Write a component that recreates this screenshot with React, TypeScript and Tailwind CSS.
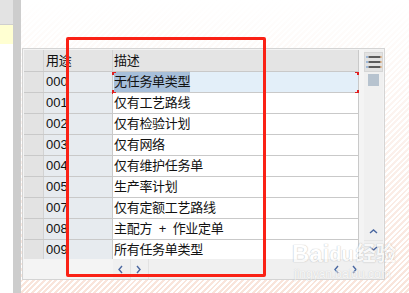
import React from 'react';

const rows = [
  { code: '000', text: '无任务单类型' },
  { code: '001', text: '仅有工艺路线' },
  { code: '002', text: '仅有检验计划' },
  { code: '003', text: '仅有网络' },
  { code: '004', text: '仅有维护任务单' },
  { code: '005', text: '生产率计划' },
  { code: '007', text: '仅有定额工艺路线' },
  { code: '008', text: '主配方  +  作业定单' },
  { code: '009', text: '所有任务单类型' },
];

const Chevron = ({ dir }: { dir: 'left' | 'right' | 'up' | 'down' }) => {
  const d = {
    left: 'M5 1 L2 4.5 L5 8',
    right: 'M2 1 L5 4.5 L2 8',
    up: 'M1 5 L4.5 2 L8 5',
    down: 'M1 2 L4.5 5 L8 2',
  }[dir];
  return (
    <svg width="9" height="9" viewBox="0 0 9 9">
      <path d={d} fill="none" stroke="#4a67a0" strokeWidth="1.4" />
    </svg>
  );
};

const ListIcon = () => (
  <svg width="16" height="14" viewBox="0 0 16 14">
    {[2, 7, 12].map((y) => (
      <g key={y}>
        <rect x="0.5" y={y - 1} width="1" height="2" fill="#5a8fd0" />
        <rect x="2.5" y={y - 1} width="12" height="2" fill="#5c5c5c" />
        <rect x="14.5" y={y - 1} width="1" height="2" fill="#e0a060" />
      </g>
    ))}
  </svg>
);

export default function App() {
  return (
    <div className="w-[409px] h-[293px] flex overflow-hidden relative bg-white font-['Liberation_Sans','Noto_Sans_CJK_SC',sans-serif] text-[13px] text-[#111]">
      {/* left strip */}
      <div className="w-[13px] flex flex-col">
        <div className="h-[25px] bg-[#e3e3e3] border-b border-[#cfcfcf]" />
        <div className="h-[19px] bg-[#ffffd2]" />
        <div className="flex-1 bg-white" />
      </div>
      <div className="w-[8px] bg-[#cdcdcd]" />

      {/* main area */}
      <div className="flex-1 flex flex-col bg-[linear-gradient(to_bottom,rgba(255,255,255,1)_0%,rgba(255,255,255,0.75)_25%,rgba(255,255,255,0.1)_100%),repeating-linear-gradient(135deg,#ffffff_0px,#ffffff_2px,#f8e1d6_2px,#f8e1d6_4px)]">
        <div className="h-[48px]" />
        <div className="ml-[1px] w-[363px] h-[232px] border border-[#d4d4d4] bg-[#f4f4f4] flex pt-[1px] pl-[1px] pr-[1px]">
          {/* table + horizontal scroll */}
          <div className="w-[340px] flex flex-col">
            <div className="w-[335px] flex flex-col">
              {/* header */}
              <div className="h-[22px] flex bg-[#e4e4e4] border-b border-[#c9c9c9]">
                <div className="w-[20px] border-r border-[#d2d2d2]" />
                <div className="w-[69px] border-r border-[#d2d2d2] pl-[2px] flex items-center tracking-[-0.3px]">用途</div>
                <div className="w-[246px] border-r border-[#c9c9c9] pl-[1px] flex items-center tracking-[-0.3px]">描述</div>
              </div>
              {/* rows */}
              <div className="h-[187px] overflow-hidden">
                {rows.map((r, i) => (
                  <div key={r.code} className="h-[21px] flex border-b border-[#c9c9c9]">
                    <div className="w-[20px] bg-[#e3e3e3] border-r border-[#d2d2d2]" />
                    <div className="w-[69px] bg-[#e7ebef] border-r border-[#c9c9c9] pl-[2px] flex items-center">
                      {r.code}
                    </div>
                    <div
                      className={
                        i === 0
                          ? 'w-[246px] relative bg-[#e3eff9] border-r border-[#c9c9c9] pl-[1px] flex items-center'
                          : 'w-[246px] relative bg-white border-r border-[#c9c9c9] pl-[1px] flex items-center'
                      }
                    >
                      {i === 0 ? (
                        <>
                          <span className="bg-[#a7bfda] whitespace-pre tracking-[-0.3px]">{r.text}</span>
                          <span className="absolute left-[-1px] top-[-1px] w-[4px] h-[4px] border-l-2 border-t-2 border-[#e02020]" />
                          <span className="absolute left-[-1px] bottom-[-2px] w-[4px] h-[4px] border-l-2 border-b-2 border-[#e02020]" />
                          <span className="absolute right-[-1px] top-[-1px] w-[4px] h-[4px] border-r-2 border-t-2 border-[#e02020]" />
                          <span className="absolute right-[-1px] bottom-[-2px] w-[4px] h-[4px] border-r-2 border-b-2 border-[#e02020]" />
                        </>
                      ) : (
                        <span className="whitespace-pre tracking-[-0.3px]">{r.text}</span>
                      )}
                    </div>
                  </div>
                ))}
              </div>
            </div>
            {/* horizontal scroll */}
            <div className="h-[20px] flex">
              <div className="w-[89px]" />
              <div className="flex-1 flex bg-[#f0f0f0]">
                <div className="w-[18px] flex items-center justify-center border-r border-[#e2e2e2]">
                  <Chevron dir="left" />
                </div>
                <div className="w-[18px] flex items-center justify-center border-r border-[#e2e2e2]">
                  <Chevron dir="right" />
                </div>
                <div className="flex-1" />
                <div className="w-[18px] flex items-center justify-center">
                  <Chevron dir="left" />
                </div>
                <div className="w-[18px] flex items-center justify-center">
                  <Chevron dir="right" />
                </div>
              </div>
            </div>
          </div>

          {/* vertical scroll */}
          <div className="w-[19px] bg-[#f0f0f0] flex flex-col items-center pt-[2px]">
            <div className="w-[19px] h-[20px] bg-[#e2e2e2] border border-[#d6d6d6] flex items-center justify-center">
              <ListIcon />
            </div>
            <div className="mt-[2px] w-[11px] h-[12px] bg-[#b7c3cf]" />
            <div className="flex-1" />
            <div className="w-[19px] h-[17px] flex items-center justify-center border-b border-[#e6e6e6]">
              <Chevron dir="up" />
            </div>
            <div className="w-[19px] h-[17px] flex items-center justify-center">
              <Chevron dir="down" />
            </div>
            <div className="h-[21px]" />
          </div>
        </div>
      </div>

      {/* watermark */}
      <div className="absolute left-[292px] top-[241px] flex flex-col items-start pointer-events-none opacity-55">
        <div className="flex items-end text-[24px] leading-[26px] font-bold text-white [text-shadow:0_0_1px_#9a9a9a,0_0_1px_#9a9a9a] font-['Liberation_Sans','Noto_Sans_CJK_SC',sans-serif]">
          <span>Bai</span>
          <span className="text-[20px]">du</span>
          <span className="text-[20px] ml-[2px]">经验</span>
        </div>
        <div className="text-[12px] leading-[14px] text-white [text-shadow:0_0_1px_#9a9a9a] ml-[2px]">jingyan.baidu.com</div>
      </div>

      {/* red annotation box */}
      <div className="absolute left-[66px] top-[37px] w-[200px] h-[240px] border-[3px] border-[#fa2115] rounded-[2px] pointer-events-none" />
    </div>
  );
}
